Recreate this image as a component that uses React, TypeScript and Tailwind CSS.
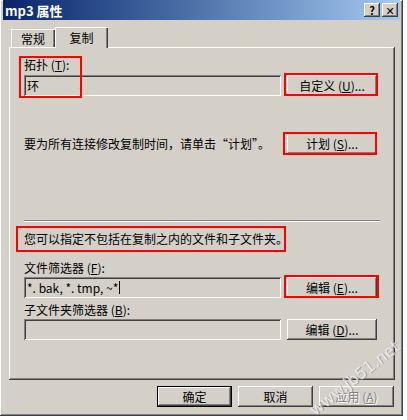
import React from "react";

const raised =
  "shadow-[inset_-1px_-1px_#404040,inset_1px_1px_#ffffff,inset_-2px_-2px_#808080]";
const sunken =
  "shadow-[inset_1px_1px_#808080,inset_-1px_-1px_#ffffff,inset_2px_2px_#404040,inset_-2px_-2px_#d4d0c8]";
const font = { fontFamily: '"Noto Sans CJK SC", "DejaVu Sans", sans-serif' };

function Btn({ children, w = "w-[90px]", disabled = false, def = false }: { children: React.ReactNode; w?: string; disabled?: boolean; def?: boolean }) {
  return (
    <div
      className={`${w} h-[21px] shrink-0 whitespace-pre flex items-center justify-center text-[12px] leading-none ${
        def
          ? "border border-black shadow-[inset_-1px_-1px_#404040,inset_1px_1px_#ffffff,inset_-2px_-2px_#808080]"
          : raised
      } ${disabled ? "text-[#808080] [text-shadow:1px_1px_#ffffff]" : "text-black"}`}
    >
      {children}
    </div>
  );
}

function Box({ children }: { children?: React.ReactNode }) {
  return (
    <div className={`w-[257px] h-[21px] shrink-0 ${sunken} flex items-center pl-[3px] text-[12px] leading-none text-black whitespace-pre`}>
      {children}
    </div>
  );
}

function Red({ className }: { className: string }) {
  return <div className={`absolute border-2 border-[#ff0000] pointer-events-none ${className}`} />;
}

export default function App() {
  return (
    <div className="w-[407px] h-[420px] bg-white relative overflow-hidden" style={font}>
      <div className={`w-[403px] h-[416px] bg-[#d4d0c8] ${raised} flex flex-col px-[3px]`}>
        {/* title bar */}
        <div className="h-[20px] bg-gradient-to-r from-[#0a246a] to-[#a6caf0] flex items-center pl-[2px] pr-[2px]">
          <span className="text-white font-bold text-[13px] leading-none flex-1">mp3 属性</span>
          <div className={`w-[16px] h-[14px] bg-[#d4d0c8] ${raised} flex items-center justify-center text-[11px] font-bold leading-none text-black`}>?</div>
          <div className={`w-[16px] h-[14px] ml-[2px] bg-[#d4d0c8] ${raised} flex items-center justify-center text-[11px] font-bold leading-none text-black`}>✕</div>
        </div>

        {/* tabs */}
        <div className="mx-[6px] mt-[6px] flex items-end h-[21px] pl-[2px]">
          <div className="w-[44px] h-[18px] shadow-[inset_1px_1px_#ffffff,inset_-1px_0_#404040,inset_-2px_0_#808080] flex items-center justify-center text-[12px] leading-none pt-[2px]">
            常规
          </div>
          <div className="w-[53px] h-[21px] relative top-[1px] bg-[#d4d0c8] z-10 shadow-[inset_1px_1px_#ffffff,inset_-1px_0_#404040,inset_-2px_0_#808080] flex items-center justify-center text-[12px] leading-none">
            复制
          </div>
        </div>

        {/* panel */}
        <div className={`mx-[6px] w-[386px] h-[333px] ${raised} relative pt-[11px] px-[15px] text-[12px] text-black`}>
          <div className="h-[14px] leading-[14px] whitespace-pre">
            拓扑 (<u>T</u>):
          </div>
          <div className="flex items-center gap-[6px] mt-[3px]">
            <Box>环</Box>
            <Btn>自定义 (<u>U</u>)...</Btn>
          </div>

          <div className="flex items-center gap-[10px] mt-[37px]">
            <div className="w-[253px] leading-none whitespace-nowrap">要为所有连接修改复制时间，请单击“计划”。</div>
            <Btn>计划 (<u>S</u>)...</Btn>
          </div>

          <div className="mt-[66px] w-[356px] h-[2px] border-t border-[#808080] border-b border-b-white" />

          <div className="mt-[10px] h-[14px] leading-[14px]">您可以指定不包括在复制之内的文件和子文件夹。</div>

          <div className="mt-[15px] h-[14px] leading-[14px] whitespace-pre">
            文件筛选器 (<u>F</u>):
          </div>
          <div className="flex items-center gap-[6px] mt-[2px]">
            <Box>
              *. bak, *. tmp, ~*<span className="inline-block w-[1px] h-[13px] bg-black ml-[1px]" />
            </Box>
            <Btn>编辑 (<u>E</u>)...</Btn>
          </div>

          <div className="mt-[5px] h-[14px] leading-[14px] whitespace-pre">
            子文件夹筛选器 (<u>B</u>):
          </div>
          <div className="flex items-center gap-[6px] mt-[2px]">
            <Box />
            <Btn>编辑 (<u>D</u>)...</Btn>
          </div>

          <Red className="left-[10px] top-[9px] w-[63px] h-[42px]" />
          <Red className="left-[275px] top-[26px] w-[94px] h-[23px]" />
          <Red className="left-[274px] top-[85px] w-[94px] h-[23px]" />
          <Red className="left-[7px] top-[179px] w-[270px] h-[26px]" />
          <Red className="left-[275px] top-[228px] w-[95px] h-[23px]" />
        </div>

        {/* bottom buttons */}
        <div className="flex justify-end gap-[6px] mt-[6px] pr-[6px]">
          <Btn w="w-[75px]" def>确定</Btn>
          <Btn w="w-[75px]">取消</Btn>
          <Btn w="w-[75px]" disabled>
            应用 (<u>A</u>)
          </Btn>
        </div>
      </div>

      <Red className="left-[55px] top-[27px] w-[53px] h-[20px]" />

      <div
        className="absolute left-[312px] top-[404px] -rotate-[38deg] origin-left text-[16px] text-[#f0f0f0] [text-shadow:1px_1px_#9a9a9a] leading-none whitespace-nowrap opacity-80"
        style={{ fontFamily: '"DejaVu Sans", sans-serif' }}
      >
        www.jb51.net
      </div>
    </div>
  );
}
